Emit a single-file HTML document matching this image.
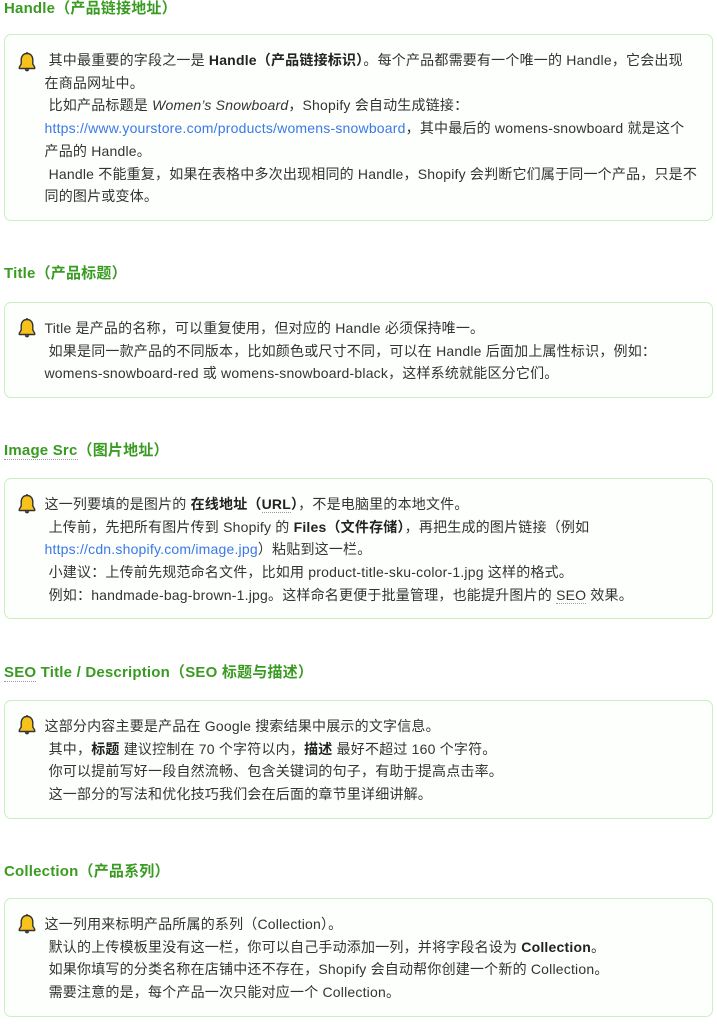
<!DOCTYPE html>
<html><head><meta charset="utf-8"><style>
*{margin:0;padding:0;box-sizing:border-box}
body{width:717px;height:1024px;background:#fff;position:relative;overflow:hidden;font-family:"Liberation Sans","Noto Sans CJK SC",sans-serif;color:#333;font-size:14px}
h3{position:absolute;left:4px;font-size:15px;font-weight:bold;color:#3a9b22;line-height:20px;white-space:nowrap;letter-spacing:0.2px}
.box{position:absolute;left:4px;width:709px;border:1.5px solid #c9efc2;border-radius:7px;background:#fdfffc;padding:14px 4px 13px 39.5px;line-height:22.7px;letter-spacing:0.2px;white-space:nowrap;overflow:hidden}
.bell{position:absolute;left:12px;width:20px;height:22px}
a{color:#3b78e7;text-decoration:none}
b{color:#222}
.u{border-bottom:1px dotted #999}
</style></head><body>
<svg width="0" height="0" style="position:absolute"><defs><symbol id="b" viewBox="0 0 20 22"><path d="M10 2.5c-3.6 0-5.8 2.7-5.8 6.3v4.2L2.3 16.2v1.3h15.4v-1.3L15.8 13V8.8c0-3.6-2.2-6.3-5.8-6.3z" fill="#f7c21c" stroke="#333" stroke-width="1.4" stroke-linejoin="round"/><path d="M7.8 18.2a2.2 2.2 0 0 0 4.4 0z" fill="#333"/><circle cx="10" cy="2" r="1" fill="#333"/></symbol></defs></svg>

<h3 style="top:-1px">Handle（产品链接地址）</h3>
<div class="box" style="top:34px;height:187px"><svg class="bell" style="top:16px"><use href="#b"/></svg>
&nbsp;其中最重要的字段之一是 <b>Handle（产品链接标识）</b>。每个产品都需要有一个唯一的 Handle，它会出现<br>在商品网址中。<br>&nbsp;比如产品标题是 <i>Women’s Snowboard</i>，Shopify 会自动生成链接：<br><a>https://www.yourstore.com/products/womens-snowboard</a>，其中最后的 womens-snowboard 就是这个<br>产品的 Handle。<br>&nbsp;Handle 不能重复，如果在表格中多次出现相同的 Handle，Shopify 会判断它们属于同一个产品，只是不<br>同的图片或变体。</div>

<h3 style="top:264px">Title（产品标题）</h3>
<div class="box" style="top:302px;height:96px"><svg class="bell" style="top:14px"><use href="#b"/></svg>
Title 是产品的名称，可以重复使用，但对应的 Handle 必须保持唯一。<br>&nbsp;如果是同一款产品的不同版本，比如颜色或尺寸不同，可以在 Handle 后面加上属性标识，例如：<br>womens-snowboard-red 或 womens-snowboard-black，这样系统就能区分它们。</div>

<h3 style="top:441px"><span class="u">Image Src</span>（图片地址）</h3>
<div class="box" style="top:478px;height:141px"><svg class="bell" style="top:14px"><use href="#b"/></svg>
这一列要填的是图片的 <b>在线地址（<span class="u">URL</span>）</b>，不是电脑里的本地文件。<br>&nbsp;上传前，先把所有图片传到 Shopify 的 <b>Files（文件存储）</b>，再把生成的图片链接（例如<br><a>https://cdn.shopify.com/image.jpg</a>）粘贴到这一栏。<br>&nbsp;小建议：上传前先规范命名文件，比如用 product-title-sku-color-1.jpg 这样的格式。<br>&nbsp;例如：handmade-bag-brown-1.jpg。这样命名更便于批量管理，也能提升图片的 <span class="u">SEO</span> 效果。</div>

<h3 style="top:663px"><span class="u">SEO</span> Title / Description（SEO 标题与描述）</h3>
<div class="box" style="top:700px;height:119px"><svg class="bell" style="top:13px"><use href="#b"/></svg>
这部分内容主要是产品在 Google 搜索结果中展示的文字信息。<br>&nbsp;其中，<b>标题</b> 建议控制在 70 个字符以内，<b>描述</b> 最好不超过 160 个字符。<br>&nbsp;你可以提前写好一段自然流畅、包含关键词的句子，有助于提高点击率。<br>&nbsp;这一部分的写法和优化技巧我们会在后面的章节里详细讲解。</div>

<h3 style="top:862px">Collection（产品系列）</h3>
<div class="box" style="top:898px;height:119px"><svg class="bell" style="top:14px"><use href="#b"/></svg>
这一列用来标明产品所属的系列（Collection）。<br>&nbsp;默认的上传模板里没有这一栏，你可以自己手动添加一列，并将字段名设为 <b>Collection</b>。<br>&nbsp;如果你填写的分类名称在店铺中还不存在，Shopify 会自动帮你创建一个新的 Collection。<br>&nbsp;需要注意的是，每个产品一次只能对应一个 Collection。</div>
</body></html>
